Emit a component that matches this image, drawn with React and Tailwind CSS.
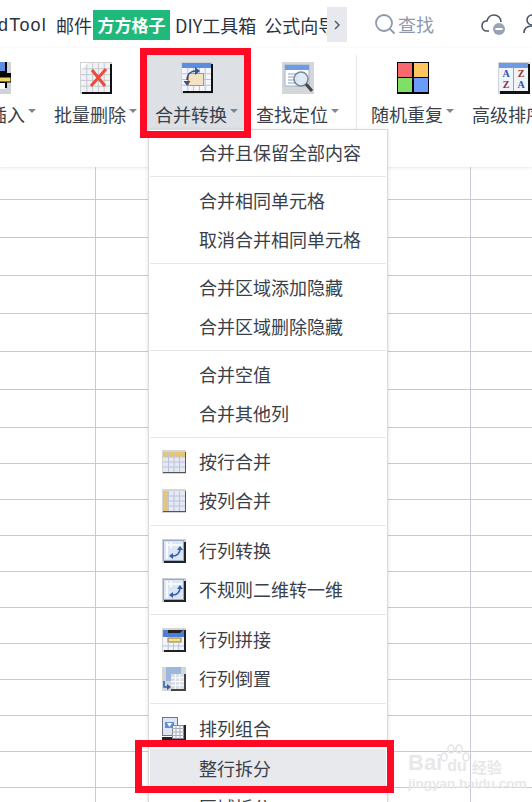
import React from "react";
import { Search } from "lucide-react";

const FONT = "font-['Noto_Sans_CJK_SC','Noto_Sans',sans-serif]";

// row heights of the sheet, they are not all the same in the picture
const ROW_HEIGHTS = [33, 38, 38, 38, 38, 38, 38, 36, 36, 36, 36, 36, 36, 36, 36, 36, 36, 36];

// little table used by most of the ribbon icons
function TableLines({ x, y, w, h, cols, rows, color = "#b9c3d6" }) {
  const lines = [];
  for (let i = 1; i < cols; i++) {
    const px = x + (w * i) / cols;
    lines.push(<line key={"c" + i} x1={px} y1={y} x2={px} y2={y + h} stroke={color} strokeWidth="1" />);
  }
  for (let i = 1; i < rows; i++) {
    const py = y + (h * i) / rows;
    lines.push(<line key={"r" + i} x1={x} y1={py} x2={x + w} y2={py} stroke={color} strokeWidth="1" />);
  }
  return <>{lines}</>;
}

function IconMerge() {
  return (
    <svg width="32" height="32" viewBox="0 0 32 32">
      <rect width="32" height="32" fill="#cfd2d6" />
      <rect x="2" y="2" width="30" height="29" fill="#111" />
      <rect x="1" y="1" width="29" height="28" fill="#f4f6fb" />
      <rect x="1" y="1" width="29" height="5" fill="#5b8de0" />
      <TableLines x={1} y={6} w={29} h={23} cols={5} rows={4} />
      <rect x="7.5" y="11.5" width="15" height="12" fill="#f3e2c4" stroke="#d08a4a" />
      <path d="M6 18 C6 12 10 9 15 9" fill="none" stroke="#2f5596" strokeWidth="1.6" />
      <path d="M14 5 L19 9 L14 13 Z" fill="#2f5596" />
      <path d="M2.5 19 L9.5 19 L6 24 Z" fill="#2f5596" />
    </svg>
  );
}

function IconDelete() {
  return (
    <svg width="32" height="32" viewBox="0 0 32 32">
      <rect width="32" height="32" fill="#cfd2d6" />
      <rect x="2" y="2" width="30" height="30" fill="#111" />
      <rect x="1" y="1" width="29" height="29" fill="#f2f2f4" />
      <TableLines x={1} y={1} w={29} h={29} cols={5} rows={5} color="#c4c8d0" />
      <path d="M1 1 H8 L1 8 Z" fill="#fff" />
      <path d="M12 8 L25 24 M26 7 L11 24" stroke="#ee4a3c" strokeWidth="3" />
    </svg>
  );
}

function IconFind() {
  return (
    <svg width="32" height="32" viewBox="0 0 32 32">
      <rect width="32" height="32" fill="#d5d6d8" />
      <rect x="3" y="3" width="24" height="21" fill="#fff" stroke="#9fb3d6" />
      <rect x="3" y="3" width="24" height="5" fill="#6f9be4" />
      <path d="M6 12 H16 M6 15 H16 M6 18 H16 M6 21 H16" stroke="#8da2c0" />
      <circle cx="19" cy="17" r="7" fill="#d6e6f5" fillOpacity="0.8" stroke="#7a8794" strokeWidth="1.5" />
      <path d="M24 22 L30 29" stroke="#444" strokeWidth="3" />
    </svg>
  );
}

function IconRandom() {
  return (
    <svg width="32" height="32" viewBox="0 0 32 32">
      <rect width="32" height="32" fill="#000" />
      <rect x="1" y="1" width="14" height="14" fill="#f8686c" />
      <rect x="17" y="1" width="14" height="14" fill="#fec75e" />
      <rect x="1" y="16" width="14" height="14" fill="#7fe068" />
      <rect x="17" y="16" width="14" height="14" fill="#6b9cfb" />
    </svg>
  );
}

function IconSort() {
  return (
    <svg width="32" height="32" viewBox="0 0 32 32">
      <rect width="32" height="32" fill="#d0d3d8" />
      <rect x="2" y="2" width="30" height="30" fill="#111" />
      <rect x="1" y="1" width="29" height="28" fill="#f1f3fa" />
      <rect x="1" y="1" width="29" height="5" fill="#6f9be4" />
      <line x1="15.5" y1="6" x2="15.5" y2="29" stroke="#9aa5b8" />
      <g fontSize="10" fontWeight="700" fontFamily="'Liberation Serif',serif" textAnchor="middle">
        <text x="8" y="15" fill="#2b55a5">A</text>
        <text x="8" y="26" fill="#8e2d2d">Z</text>
        <text x="23" y="15" fill="#8e2d2d">Z</text>
        <text x="23" y="26" fill="#2b55a5">A</text>
      </g>
    </svg>
  );
}

function IconInsert() {
  return (
    <svg width="32" height="32" viewBox="0 0 32 32">
      <rect width="32" height="32" fill="#d0d3d8" />
      <path d="M21 0 H28 V11 H32 V19 H28 V26 H21 Z" fill="#000" />
      <rect x="21" y="0" width="5" height="9" fill="#5b8de0" />
      <rect x="18" y="15" width="14" height="5" fill="#f1d466" stroke="#000" />
      <rect x="21" y="21" width="5" height="6" fill="#fff" />
    </svg>
  );
}

function MenuIcon({ kind }) {
  if (kind === "byRow" || kind === "byCol") {
    return (
      <svg width="24" height="24" viewBox="0 0 24 24">
        <rect width="24" height="24" fill="#d4d5d8" />
        <rect x="1" y="2" width="23" height="21" fill="#555" />
        <rect x="1" y="2" width="22" height="20" fill="#e4e9f5" />
        {kind === "byRow" ? (
          <rect x="1" y="2" width="22" height="5" fill="#eac46e" />
        ) : (
          <rect x="1" y="2" width="6" height="20" fill="#eac46e" />
        )}
        <TableLines x={1} y={2} w={22} h={20} cols={4} rows={4} color="#bcc4d6" />
      </svg>
    );
  }
  if (kind === "transpose") {
    return (
      <svg width="24" height="24" viewBox="0 0 24 24">
        <rect width="24" height="24" fill="#c9ced6" />
        <rect x="2" y="3" width="22" height="21" fill="#222" />
        <rect x="1.5" y="1.5" width="20" height="20" fill="#dce5f6" stroke="#9aa9c4" />
        <path d="M5 3 V20 M9 3 V9 M5 6 H20" stroke="#fff" strokeWidth="1.6" />
        <path d="M18 10 C18 14 15 17 11 17" fill="none" stroke="#2f5fa8" strokeWidth="1.5" />
        <path d="M15 11 L18 7 L21 11 Z M11 14 L7 17 L11 20 Z" fill="#2f5fa8" />
      </svg>
    );
  }
  if (kind === "join") {
    return (
      <svg width="24" height="24" viewBox="0 0 24 24">
        <rect width="24" height="24" fill="#d4d5d8" />
        <rect x="2" y="2" width="22" height="22" fill="#222" />
        <rect x="1" y="5" width="21" height="17" fill="#f2f4fa" />
        <path d="M1 5 H6 V2 H1 Z M18 5 L22 1 V5 Z" fill="#4d7fd6" />
        <rect x="1" y="5" width="21" height="4" fill="#4d7fd6" />
        <rect x="6" y="10" width="13" height="4" fill="#f6df8e" stroke="#8d7c3c" />
        <TableLines x={1} y={14} w={21} h={8} cols={4} rows={2} />
      </svg>
    );
  }
  if (kind === "reverse") {
    return (
      <svg width="24" height="24" viewBox="0 0 24 24">
        <rect width="24" height="24" fill="#d4d5d8" />
        <rect x="4" y="0" width="15" height="14" fill="#9db6dd" />
        <rect x="9" y="7" width="15" height="17" fill="#444" />
        <rect x="9" y="7" width="13" height="15" fill="#d9dde4" />
        <TableLines x={9} y={7} w={13} h={15} cols={3} rows={4} color="#fff" />
        <path d="M2 14 V20 H6" fill="none" stroke="#2f5fa8" strokeWidth="1.5" />
        <path d="M5 17 L9 20 L5 23 Z" fill="#2f5fa8" />
      </svg>
    );
  }
  return (
    <svg width="24" height="24" viewBox="0 0 24 24">
      <rect x="0.5" y="0.5" width="15" height="18" fill="#dfe5f2" stroke="#6d7686" />
      <rect x="3" y="5" width="9" height="6" fill="#5d8ed8" />
      <path d="M5 6 L10 6 L7.5 10 Z" fill="#fff" />
      <rect x="0" y="20" width="13" height="4" fill="#222" />
      <rect x="10" y="8" width="14" height="16" fill="#222" />
      <rect x="10.5" y="8.5" width="11" height="13" fill="#f5f6fa" stroke="#77808e" />
      <TableLines x={10} y={8} w={12} h={14} cols={3} rows={4} color="#a7afbd" />
    </svg>
  );
}

function Caret() {
  return <span className="ml-[3px] mb-[6px] border-x-4 border-t-4 border-x-transparent border-t-[#7e8694]" />;
}

function RibbonButton({ label, icon, active, className = "" }) {
  return (
    <div
      className={
        "flex flex-col items-center shrink-0 w-[101px] h-[76px] pt-[7px] rounded-t-[3px] " +
        (active ? "bg-[#dde0e4] " : "") +
        className
      }
    >
      {icon}
      <div className="flex items-center mt-[5px] h-[30px] text-[18px] text-[#3a3f4a] whitespace-nowrap">
        {label}
        <Caret />
      </div>
    </div>
  );
}

function TopBar() {
  return (
    <div className="flex items-center h-[48px] shrink-0 text-[18px] text-[#2c3340] whitespace-nowrap overflow-hidden">
      <div className="flex items-center w-[327px] h-[30px] mt-[2px] shrink-0 overflow-hidden">
        <span className="font-['Liberation_Sans',sans-serif] -ml-[2px] tracking-[1.2px]">dTool</span>
        <span className="ml-[9px]">邮件</span>
        <span className="ml-[1px] w-[77px] h-[30px] shrink-0 flex items-center justify-center bg-[#1fb97c] text-white text-[17px] font-bold">方方格子</span>
        <span className="ml-[5px]">DIY工具箱</span>
        <span className="ml-[8px]">公式向导</span>
      </div>
      <div className="w-[20px] h-[35px] flex items-center justify-center bg-[#e7e9ee] shrink-0 mt-[1px]">
        <svg width="8" height="10" viewBox="0 0 8 10">
          <path d="M2 1 L6 5 L2 9" fill="none" stroke="#4b5563" strokeWidth="1.4" />
        </svg>
      </div>
      <Search className="ml-[26px] shrink-0 text-[#8e99ad]" size={24} strokeWidth={1.8} />
      <span className="ml-[1px] text-[#8e99ad]">查找</span>
      <svg className="ml-[47px] shrink-0" width="26" height="24" viewBox="0 0 26 24">
        <path d="M8 19 H6 C3 19 1 17 1 14 C1 11 3 9 6 9 C7 5 10 3 13 3 C17 3 20 6 20 10" fill="none" stroke="#4c5669" strokeWidth="1.6" />
        <circle cx="18" cy="17" r="6" fill="#9aa3b3" />
        <rect x="14.5" y="16" width="7" height="2" fill="#fff" />
      </svg>
      <svg className="ml-[16px] shrink-0" width="10" height="24" viewBox="0 0 10 24">
        <circle cx="9" cy="8" r="5" fill="none" stroke="#4c5669" strokeWidth="1.6" />
        <path d="M1 21 C1 16 4 14 9 14" fill="none" stroke="#4c5669" strokeWidth="1.6" />
      </svg>
    </div>
  );
}

function Ribbon() {
  return (
    <div className="flex items-start h-[119px] shrink-0 pt-[7px] shadow-[0_1px_3px_rgba(0,0,0,0.1)] overflow-hidden">
      <RibbonButton label={<span className="ml-[36px]">插入</span>} icon={<IconInsert />} className="-ml-[56px]" />
      <RibbonButton label="批量删除" icon={<IconDelete />} />
      <RibbonButton label="合并转换" icon={<IconMerge />} active />
      <RibbonButton label="查找定位" icon={<IconFind />} />
      <div className="w-px h-[78px] bg-[#e8e9ec] ml-[8px] mr-[5px] shrink-0" />
      <RibbonButton label="随机重复" icon={<IconRandom />} />
      <RibbonButton label="高级排序" icon={<IconSort />} />
    </div>
  );
}

function Sheet() {
  return (
    <div className="flex-1 overflow-hidden">
      {ROW_HEIGHTS.map((h, i) => (
        <div key={i} className="border-b border-[#c5cad6] flex" style={{ height: h }}>
          <div className="w-[96px] border-r border-[#c5cad6]" />
          <div className="w-[375px] border-r border-[#c5cad6]" />
        </div>
      ))}
    </div>
  );
}

function MenuSep({ wide }) {
  return <div className={"h-px bg-[#e6e7ea] mx-[1px] " + (wide ? "my-[5px]" : "my-[4px]")} />;
}

function MenuItem({ text, icon, hover }) {
  return (
    <div className={"flex items-center h-[39px] " + (hover ? "bg-[#e7e9ed] mx-[1px] pl-[49px]" : "pl-[50px]")}>
      {text}
      {icon && <span className="absolute left-[13px] flex">{icon}</span>}
    </div>
  );
}

function Menu() {
  return (
    <div className="absolute left-[148px] top-[129px] w-[240px] h-[700px] bg-white border border-[#d9dadd] shadow-[0_1px_4px_rgba(0,0,0,0.12)] pt-[3px] text-[18px] text-[#3a3f4a]">
      <MenuItem text="合并且保留全部内容" />
      <MenuSep />
      <MenuItem text="合并相同单元格" />
      <MenuItem text="取消合并相同单元格" />
      <MenuSep />
      <MenuItem text="合并区域添加隐藏" />
      <MenuItem text="合并区域删除隐藏" />
      <MenuSep />
      <MenuItem text="合并空值" />
      <MenuItem text="合并其他列" />
      <MenuSep />
      <MenuItem text="按行合并" icon={<MenuIcon kind="byRow" />} />
      <MenuItem text="按列合并" icon={<MenuIcon kind="byCol" />} />
      <MenuSep wide />
      <MenuItem text="行列转换" icon={<MenuIcon kind="transpose" />} />
      <MenuItem text="不规则二维转一维" icon={<MenuIcon kind="transpose" />} />
      <MenuSep wide />
      <MenuItem text="行列拼接" icon={<MenuIcon kind="join" />} />
      <MenuItem text="行列倒置" icon={<MenuIcon kind="reverse" />} />
      <MenuSep wide />
      <MenuItem text="排列组合" icon={<MenuIcon kind="combo" />} />
      <div className="h-px" />
      <MenuItem text="整行拆分" hover />
      <MenuItem text="区域拆分" />
    </div>
  );
}

function Watermark() {
  return (
    <div className="absolute left-[408px] top-[744px] w-[96px] h-[46px] text-[#e8e8e8] pointer-events-none font-['Liberation_Sans',sans-serif] font-bold">
      <svg className="absolute left-[32px] top-0" width="30" height="20" viewBox="0 0 30 20">
        <g fill="none" stroke="#e3e3e3" strokeWidth="1.5">
          <ellipse cx="4" cy="13" rx="3" ry="4" />
          <ellipse cx="11" cy="5" rx="3" ry="4" />
          <ellipse cx="19" cy="5" rx="3" ry="4" />
          <ellipse cx="26" cy="13" rx="3" ry="4" />
        </g>
      </svg>
      <div className="flex items-end h-[30px] text-[22px] leading-none">
        <span>Bai</span>
        <span className="text-[16px] ml-[5px]">du</span>
        <span className="text-[15px] ml-[5px] font-['Noto_Sans_CJK_SC',sans-serif]">经验</span>
      </div>
      <div className="text-[13.5px] leading-[14px] mt-[3px] whitespace-nowrap">jingyan.baidu.com</div>
    </div>
  );
}

export default function App() {
  return (
    <div className={"relative w-[532px] h-[802px] overflow-hidden bg-white flex flex-col " + FONT}>
      <TopBar />
      <Ribbon />
      <Sheet />
      <Menu />
      <Watermark />
      {/* red annotation boxes from the screenshot */}
      <div className="absolute left-[140px] top-[48px] w-[111px] h-[90px] border-[7px] border-[#fe0a24]" />
      <div className="absolute left-[135px] top-[740px] w-[259px] h-[53px] border-[7px] border-[#fe0a24]" />
    </div>
  );
}
